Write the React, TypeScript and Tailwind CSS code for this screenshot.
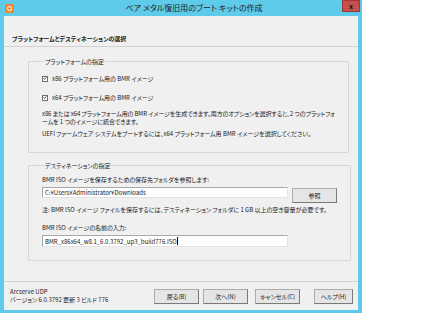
import React from 'react';

const jp = "font-['Noto_Sans_CJK_JP','Noto_Sans',sans-serif] [font-feature-settings:'palt']";

// small checked box like the old Windows style
const Check = () => (
  <span className="w-[6px] h-[6px] border border-[#707070] bg-white flex items-center justify-center shrink-0">
    <svg width="5" height="5" viewBox="0 0 5 5">
      <path d="M0.8 2.4 L2 3.6 L4.3 1" stroke="#222" strokeWidth="1" fill="none" />
    </svg>
  </span>
);

const Btn = ({ label, w }: { label: string; w: string }) => (
  <button
    className={`${w} h-[15px] bg-[#e5e5e5] border border-[#acacac] border-r-[#7a7a7a] border-b-[#7a7a7a] text-[6px] text-[#222] flex items-center justify-center whitespace-nowrap`}
  >
    {label}
  </button>
);

const App = () => {
  return (
    <div className={`w-[430px] h-[315px] bg-white ${jp} text-[#1a1a1a]`}>
      <div className="w-[362px] h-[313px] bg-[#5fcbea] flex flex-col px-[4px] pb-[3px]">
        {/* title bar */}
        <div className="h-[16px] relative flex items-center">
          <div className="w-[9px] h-[9px] bg-[#ee8a35] rounded-[1px] flex items-center justify-center ml-[1px]">
            <span className="w-[5px] h-[5px] border border-white rounded-full" />
          </div>
          <div className="flex-1 text-center text-[8px] leading-none text-[#222] pl-[16px]">
            ベア メタル復旧用のブート キットの作成
          </div>
          <div className="absolute right-[-2px] top-0 w-[18px] h-[12px] bg-[#c7504c] border border-[#9d3a36] flex items-center justify-center">
            <span className="text-[7px] font-bold leading-none text-[#111]">x</span>
          </div>
        </div>

        {/* client */}
        <div className="flex-1 bg-[#f0f0f0] flex flex-col">
          <div className="h-[31px] border-b border-[#d2d2d2] pl-[8px] pt-[6px]">
            <span className="text-[6px] font-bold leading-none">プラットフォームとデスティネーションの選択</span>
          </div>

          <div className="flex-1 pl-[24px] pr-[18px] pt-[11px] flex flex-col gap-[9px]">
            <fieldset className="border border-[#d6d6d6] h-[95px] px-[13px] rounded-[1px]">
              <legend className="text-[6px] leading-[7px] px-[1px] ml-[2px]">プラットフォームの指定</legend>
              <div className="flex flex-col text-[6px] leading-[7px] pt-[10px] whitespace-nowrap">
                <div className="flex items-center gap-[4px]">
                  <Check />
                  <span>x86 プラットフォーム用の BMR イメージ</span>
                </div>
                <div className="flex items-center gap-[4px] mt-[12px]">
                  <Check />
                  <span>x64 プラットフォーム用の BMR イメージ</span>
                </div>
                <p className="mt-[9px] leading-[8px] tracking-[-0.1px]">
                  x86 または x64 プラットフォーム用の BMR イメージを生成できます。両方のオプションを選択すると、2 つのプラットフォ
                </p>
                <p className="leading-[8px] tracking-[-0.1px]">ームを 1 つのイメージに統合できます。</p>
                <p className="mt-[4px]">UEFI ファームウェア システムをブートするには、x64 プラットフォーム用 BMR イメージを選択してください。</p>
              </div>
            </fieldset>

            <fieldset className="border border-[#d6d6d6] h-[99px] px-[13px] rounded-[1px]">
              <legend className="text-[6px] leading-[7px] px-[1px] ml-[2px]">デスティネーションの指定</legend>
              <div className="flex flex-col text-[6px] leading-[7px] pt-[7px] whitespace-nowrap">
                <span>BMR ISO イメージを保存するための保存先フォルダを参照します:</span>
                <div className="flex items-start gap-[4px] mt-[4px]">
                  <div className="w-[246px] h-[11px] bg-white border border-[#a9a9a9] border-b-[#e3e3e3] border-r-[#e3e3e3] flex items-center px-[2px]">
                    C:¥Users¥Administrator¥Downloads
                  </div>
                  <Btn label="参照" w="w-[45px] mt-[1px] h-[14px]" />
                </div>
                <span className="mt-[3px]">注: BMR ISO イメージ ファイルを保存するには、デスティネーション フォルダに 1 GB 以上の空き容量が必要です。</span>
                <span className="mt-[11px]">BMR ISO イメージの名前の入力:</span>
                <div className="w-[246px] h-[12px] mt-[4px] bg-white border border-[#a9a9a9] border-b-[#e3e3e3] border-r-[#e3e3e3] flex items-center px-[2px]">
                  BMR_x86x64_w8.1_6.0.3792_up3_build776.ISO<span className="w-px h-[8px] bg-black" />
                </div>
              </div>
            </fieldset>
          </div>

          <div className="h-[29px] border-t border-[#d2d2d2] flex items-center pl-[6px] pr-[5px]">
            <div className="flex flex-col text-[6px] leading-[8px] flex-1">
              <span>Arcserve UDP</span>
              <span>バージョン 6.0.3792 更新 3 ビルド 776</span>
            </div>
            <div className="flex items-center">
              <Btn label="戻る(B)" w="w-[45px]" />
              <Btn label="次へ(N)" w="w-[45px] ml-[4px]" />
              <Btn label="キャンセル(C)" w="w-[45px] ml-[7px]" />
              <Btn label="ヘルプ(H)" w="w-[39px] ml-[14px]" />
            </div>
          </div>
        </div>
      </div>
    </div>
  );
};

export default App;
